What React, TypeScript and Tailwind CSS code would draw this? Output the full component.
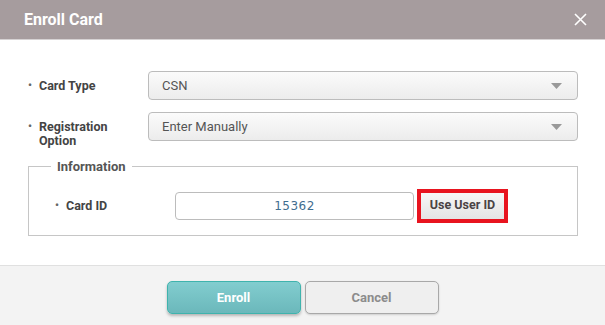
import React from 'react';

const font = { fontFamily: 'Roboto, "Liberation Sans", sans-serif' };

const Caret = () => (
  <svg width="11" height="6" viewBox="0 0 11 6" className="shrink-0">
    <path d="M0 0h11L5.5 6z" fill="#999" />
  </svg>
);

const Select: React.FC<{ value: string }> = ({ value }) => (
  <div className="flex h-[29px] w-[430px] items-center justify-between rounded-[4px] border border-[#bcbcbc] bg-gradient-to-b from-[#fbfbfb] to-[#ececec] pl-[13px] pr-[15px] text-[13px] text-[#555]">
    <span>{value}</span>
    <Caret />
  </div>
);

const Label: React.FC<{ children: React.ReactNode; width: string }> = ({ children, width }) => (
  <div className={`flex ${width} shrink-0 items-start text-[12.5px] font-bold leading-[14px] text-[#444]`}>
    <span className="mr-[7px] text-[11px] text-[#666]">•</span>
    <span>{children}</span>
  </div>
);

export default function App() {
  return (
    <div className="flex h-[325px] w-[605px] flex-col overflow-hidden bg-white" style={font}>
      <div className="flex h-[40px] shrink-0 items-center justify-between border-b border-[#d6d2d3] bg-[#a69c9e] pl-[24px] pr-[18px]">
        <span className="text-[16px] font-bold text-white">Enroll Card</span>
        <svg width="13" height="13" viewBox="0 0 13 13">
          <path d="M1 1l11 11M12 1L1 12" stroke="#fff" strokeWidth="1.6" />
        </svg>
      </div>

      <div className="flex flex-1 flex-col pl-[28px] pr-[27px] pt-[31px]">
        <div className="flex items-center">
          <Label width="w-[120px]">Card Type</Label>
          <Select value="CSN" />
        </div>
        <div className="mt-[12px] flex items-start">
          <div className="pt-[8px]">
            <Label width="w-[120px]">
              Registration
              <br />
              Option
            </Label>
          </div>
          <Select value="Enter Manually" />
        </div>

        <fieldset className="mt-[9px] h-[79px] border border-[#c6c6c6] pl-[22px] pr-[26px]">
          <legend className="px-[6px] text-[13px] font-bold text-[#555]">Information</legend>
          <div className="ml-[4px] mt-[12px] flex items-center">
            <Label width="w-[120px]">Card ID</Label>
            <div className="flex h-[28px] w-[239px] items-center justify-center rounded-[4px] border border-[#bcbcbc] bg-white tracking-[0.5px] text-[#3f6d8f]" style={{ fontFamily: '"DejaVu Sans", sans-serif', fontSize: '12px' }}>
              15362
            </div>
            <div className="ml-[3px] flex h-[34px] w-[91px] items-center justify-center border-[4px] border-[#e8141f] bg-gradient-to-b from-[#f7f7f7] to-[#e4e4e4] text-[12.5px] font-bold text-[#4a4345]">
              Use User ID
            </div>
          </div>
        </fieldset>
      </div>

      <div className="flex h-[60px] shrink-0 items-center justify-center gap-[4px] border-t border-[#e0e0e0] bg-[#f3f3f3] pt-[4px]">
        <button className="flex h-[33px] w-[134px] items-center justify-center rounded-[5px] border border-[#3fb3ad] bg-gradient-to-b from-[#82cdcf] to-[#6bb8bb] text-[13px] font-bold text-white shadow-[0_2px_3px_rgba(0,0,0,0.25)]">
          Enroll
        </button>
        <button className="flex h-[33px] w-[134px] items-center justify-center rounded-[5px] border border-[#a8a8a8] bg-[#efefef] text-[13px] font-bold text-[#8c8c8c] shadow-[0_1px_2px_rgba(0,0,0,0.15)]">
          Cancel
        </button>
      </div>
    </div>
  );
}
